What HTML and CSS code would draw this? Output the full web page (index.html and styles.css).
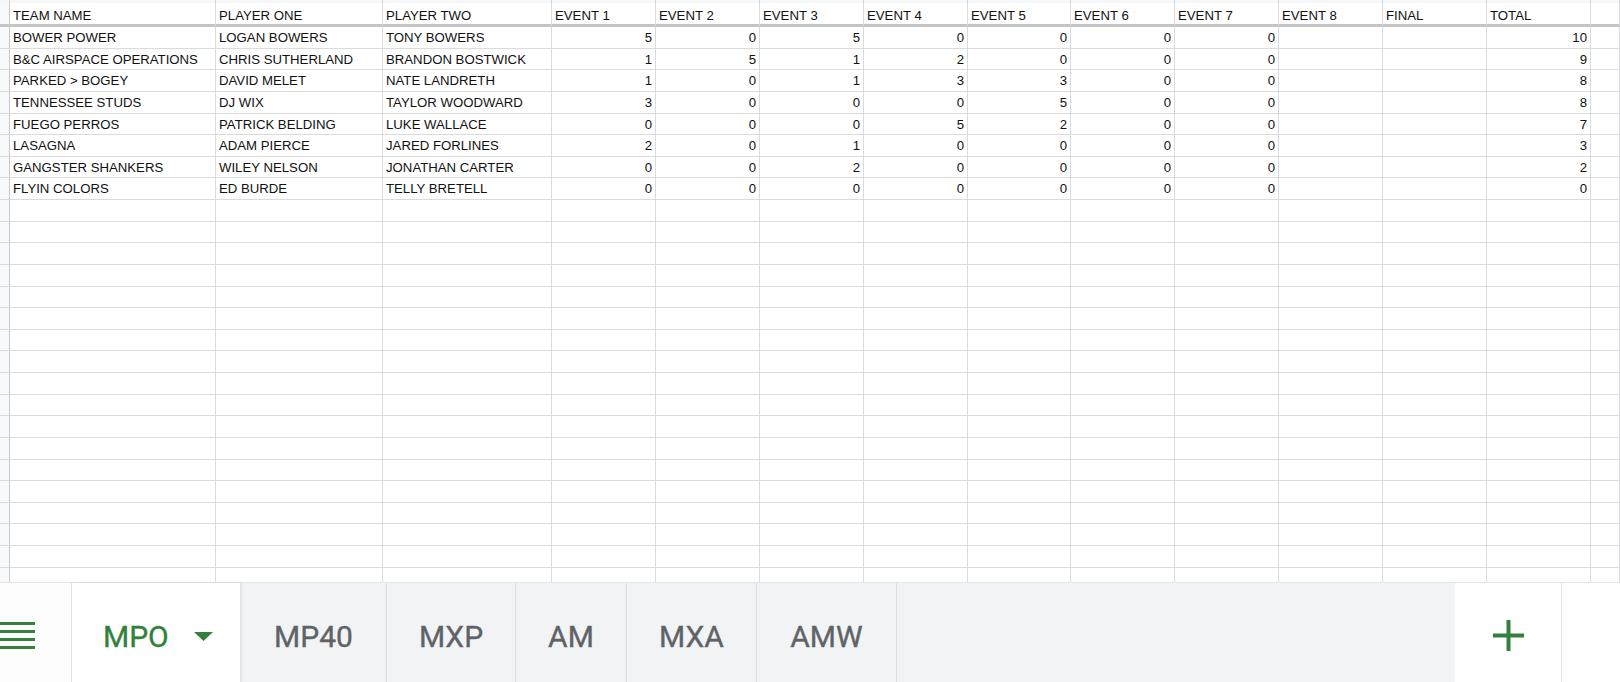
FILE: index.html
```html
<!DOCTYPE html>
<html>
<head>
<meta charset="utf-8">
<link rel="stylesheet" href="styles.css">
</head>
<body>
<div class="sheet">
  <div class="grid">
    <div class="row strip"><span class="rh"></span><span></span><span></span><span></span><span></span><span></span><span></span><span></span><span></span><span></span><span></span><span></span><span></span><span></span><span></span></div>
    <div class="row head"><span class="rh"></span><span>TEAM NAME</span><span>PLAYER ONE</span><span>PLAYER TWO</span><span>EVENT 1</span><span>EVENT 2</span><span>EVENT 3</span><span>EVENT 4</span><span>EVENT 5</span><span>EVENT 6</span><span>EVENT 7</span><span>EVENT 8</span><span>FINAL</span><span>TOTAL</span><span></span></div>
    <div class="row"><span class="rh"></span><span>BOWER POWER</span><span>LOGAN BOWERS</span><span>TONY BOWERS</span><span class="n">5</span><span class="n">0</span><span class="n">5</span><span class="n">0</span><span class="n">0</span><span class="n">0</span><span class="n">0</span><span></span><span></span><span class="n">10</span><span></span></div>
    <div class="row"><span class="rh"></span><span>B&amp;C AIRSPACE OPERATIONS</span><span>CHRIS SUTHERLAND</span><span>BRANDON BOSTWICK</span><span class="n">1</span><span class="n">5</span><span class="n">1</span><span class="n">2</span><span class="n">0</span><span class="n">0</span><span class="n">0</span><span></span><span></span><span class="n">9</span><span></span></div>
    <div class="row"><span class="rh"></span><span>PARKED &gt; BOGEY</span><span>DAVID MELET</span><span>NATE LANDRETH</span><span class="n">1</span><span class="n">0</span><span class="n">1</span><span class="n">3</span><span class="n">3</span><span class="n">0</span><span class="n">0</span><span></span><span></span><span class="n">8</span><span></span></div>
    <div class="row"><span class="rh"></span><span>TENNESSEE STUDS</span><span>DJ WIX</span><span>TAYLOR WOODWARD</span><span class="n">3</span><span class="n">0</span><span class="n">0</span><span class="n">0</span><span class="n">5</span><span class="n">0</span><span class="n">0</span><span></span><span></span><span class="n">8</span><span></span></div>
    <div class="row"><span class="rh"></span><span>FUEGO PERROS</span><span>PATRICK BELDING</span><span>LUKE WALLACE</span><span class="n">0</span><span class="n">0</span><span class="n">0</span><span class="n">5</span><span class="n">2</span><span class="n">0</span><span class="n">0</span><span></span><span></span><span class="n">7</span><span></span></div>
    <div class="row"><span class="rh"></span><span>LASAGNA</span><span>ADAM PIERCE</span><span>JARED FORLINES</span><span class="n">2</span><span class="n">0</span><span class="n">1</span><span class="n">0</span><span class="n">0</span><span class="n">0</span><span class="n">0</span><span></span><span></span><span class="n">3</span><span></span></div>
    <div class="row"><span class="rh"></span><span>GANGSTER SHANKERS</span><span>WILEY NELSON</span><span>JONATHAN CARTER</span><span class="n">0</span><span class="n">0</span><span class="n">2</span><span class="n">0</span><span class="n">0</span><span class="n">0</span><span class="n">0</span><span></span><span></span><span class="n">2</span><span></span></div>
    <div class="row"><span class="rh"></span><span>FLYIN COLORS</span><span>ED BURDE</span><span>TELLY BRETELL</span><span class="n">0</span><span class="n">0</span><span class="n">0</span><span class="n">0</span><span class="n">0</span><span class="n">0</span><span class="n">0</span><span></span><span></span><span class="n">0</span><span></span></div>
    <div class="row"><span class="rh"></span><span></span><span></span><span></span><span></span><span></span><span></span><span></span><span></span><span></span><span></span><span></span><span></span><span></span><span></span></div>
    <div class="row"><span class="rh"></span><span></span><span></span><span></span><span></span><span></span><span></span><span></span><span></span><span></span><span></span><span></span><span></span><span></span><span></span></div>
    <div class="row"><span class="rh"></span><span></span><span></span><span></span><span></span><span></span><span></span><span></span><span></span><span></span><span></span><span></span><span></span><span></span><span></span></div>
    <div class="row"><span class="rh"></span><span></span><span></span><span></span><span></span><span></span><span></span><span></span><span></span><span></span><span></span><span></span><span></span><span></span><span></span></div>
    <div class="row"><span class="rh"></span><span></span><span></span><span></span><span></span><span></span><span></span><span></span><span></span><span></span><span></span><span></span><span></span><span></span><span></span></div>
    <div class="row"><span class="rh"></span><span></span><span></span><span></span><span></span><span></span><span></span><span></span><span></span><span></span><span></span><span></span><span></span><span></span><span></span></div>
    <div class="row"><span class="rh"></span><span></span><span></span><span></span><span></span><span></span><span></span><span></span><span></span><span></span><span></span><span></span><span></span><span></span><span></span></div>
    <div class="row"><span class="rh"></span><span></span><span></span><span></span><span></span><span></span><span></span><span></span><span></span><span></span><span></span><span></span><span></span><span></span><span></span></div>
    <div class="row"><span class="rh"></span><span></span><span></span><span></span><span></span><span></span><span></span><span></span><span></span><span></span><span></span><span></span><span></span><span></span><span></span></div>
    <div class="row"><span class="rh"></span><span></span><span></span><span></span><span></span><span></span><span></span><span></span><span></span><span></span><span></span><span></span><span></span><span></span><span></span></div>
    <div class="row"><span class="rh"></span><span></span><span></span><span></span><span></span><span></span><span></span><span></span><span></span><span></span><span></span><span></span><span></span><span></span><span></span></div>
    <div class="row"><span class="rh"></span><span></span><span></span><span></span><span></span><span></span><span></span><span></span><span></span><span></span><span></span><span></span><span></span><span></span><span></span></div>
    <div class="row"><span class="rh"></span><span></span><span></span><span></span><span></span><span></span><span></span><span></span><span></span><span></span><span></span><span></span><span></span><span></span><span></span></div>
    <div class="row"><span class="rh"></span><span></span><span></span><span></span><span></span><span></span><span></span><span></span><span></span><span></span><span></span><span></span><span></span><span></span><span></span></div>
    <div class="row"><span class="rh"></span><span></span><span></span><span></span><span></span><span></span><span></span><span></span><span></span><span></span><span></span><span></span><span></span><span></span><span></span></div>
    <div class="row"><span class="rh"></span><span></span><span></span><span></span><span></span><span></span><span></span><span></span><span></span><span></span><span></span><span></span><span></span><span></span><span></span></div>
    <div class="row"><span class="rh"></span><span></span><span></span><span></span><span></span><span></span><span></span><span></span><span></span><span></span><span></span><span></span><span></span><span></span><span></span></div>
    <div class="row"><span class="rh"></span><span></span><span></span><span></span><span></span><span></span><span></span><span></span><span></span><span></span><span></span><span></span><span></span><span></span><span></span></div>
  </div>
  <div class="tabbar">
    <div class="menu">
      <svg width="36" height="30" viewBox="0 0 36 30"><rect x="0" y="0" width="35" height="3" fill="#34803c"/><rect x="0" y="8" width="35" height="3" fill="#34803c"/><rect x="0" y="16" width="35" height="3" fill="#34803c"/><rect x="0" y="24" width="35" height="3" fill="#34803c"/></svg>
    </div>
    <div class="tab active"><span>MPO</span><svg class="caret" width="19" height="9" viewBox="0 0 19 9"><path d="M0 0 L19 0 L9.5 9 Z" fill="#34803c"/></svg></div>
    <div class="tab w1"><span>MP40</span></div>
    <div class="tab w2"><span>MXP</span></div>
    <div class="tab w3"><span>AM</span></div>
    <div class="tab w4"><span>MXA</span></div>
    <div class="tab w5"><span>AMW</span></div>
    <div class="filler"></div>
    <div class="add">
      <svg width="31" height="31" viewBox="0 0 31 31"><rect x="0" y="13.5" width="31" height="4" fill="#34803c"/><rect x="13.5" y="0" width="4" height="31" fill="#34803c"/></svg>
    </div>
    <div class="rest"></div>
  </div>
</div>
</body>
</html>
```

FILE: styles.css
```css
html, body {
  margin: 0;
  padding: 0;
  background: #fff;
}
.sheet {
  width: 1620px;
  height: 682px;
  overflow: hidden;
  display: flex;
  flex-direction: column;
}
.grid {
  height: 582px;
  overflow: hidden;
  flex: none;
  font-family: "Liberation Sans", Arial, sans-serif;
  font-size: 13.2px;
  color: #111;
}
.row {
  display: grid;
  grid-template-columns: 10px 206px 167px 169px 104px 104px 104px 104px 103px 104px 104px 104px 104px 104px 1fr;
  height: 21.625px;
}
.row > span {
  box-sizing: border-box;
  border-right: 1px solid #dadbdc;
  border-bottom: 1px solid #dadbdc;
  padding: 0 3px 0 3px;
  line-height: 21px;
  white-space: nowrap;
  overflow: hidden;
}
.row > span.rh {
  background: #f8f9fa;
  border-right: 1px solid #c6c8ca;
  padding: 0;
}
.row > span.n {
  text-align: right;
  padding-right: 3px;
}
.row.strip {
  height: 3px;
}
.row.strip > span {
  background: #f6f7f8;
  border-bottom: none;
  border-right-color: #d3d4d5;
}
.row.head {
  height: 24px;
}
.row.head > span {
  border-bottom: 3px solid #c4c5c6;
  line-height: 19px;
  padding-top: 3px;
}
.tabbar {
  flex: none;
  height: 100px;
  display: flex;
  background: #f1f3f4;
  border-top: 1px solid #e3e4e6;
  box-sizing: border-box;
  font-family: Roboto, "Noto Sans", sans-serif;
  font-weight: 400;
  font-size: 30px;
  color: #5f6368;
  -webkit-text-stroke: 0.35px currentColor;
}
.menu {
  width: 72px;
  flex: none;
  background: #fdfdfd;
  border-right: 1px solid #e3e4e6;
  box-sizing: border-box;
  padding-top: 39px;
}
.menu svg {
  display: block;
}
.tab {
  flex: none;
  box-sizing: border-box;
  border-right: 1px solid #dcdee1;
  display: flex;
  align-items: center;
  justify-content: center;
  padding-top: 8px;
}
.tab.active {
  width: 169px;
  background: #fff;
  color: #34803c;
  justify-content: flex-start;
  padding-left: 31px;
  box-shadow: 1px 0 2px rgba(0,0,0,0.08);
  border-right: 1px solid #e3e4e6;
}
.tab.active .caret {
  margin-left: 25px;
  display: block;
}
.tab.w1 { width: 146px; }
.tab.w2 { width: 129px; }
.tab.w3 { width: 111px; }
.tab.w4 { width: 130px; }
.tab.w5 { width: 140px; }
.filler {
  flex: 1;
}
.add {
  width: 107px;
  flex: none;
  background: #fff;
  border-right: 1px solid #e3e4e6;
  box-sizing: border-box;
  display: flex;
  justify-content: center;
  padding-top: 37px;
}
.add svg {
  display: block;
}
.rest {
  width: 58px;
  flex: none;
  background: #fff;
}
```
